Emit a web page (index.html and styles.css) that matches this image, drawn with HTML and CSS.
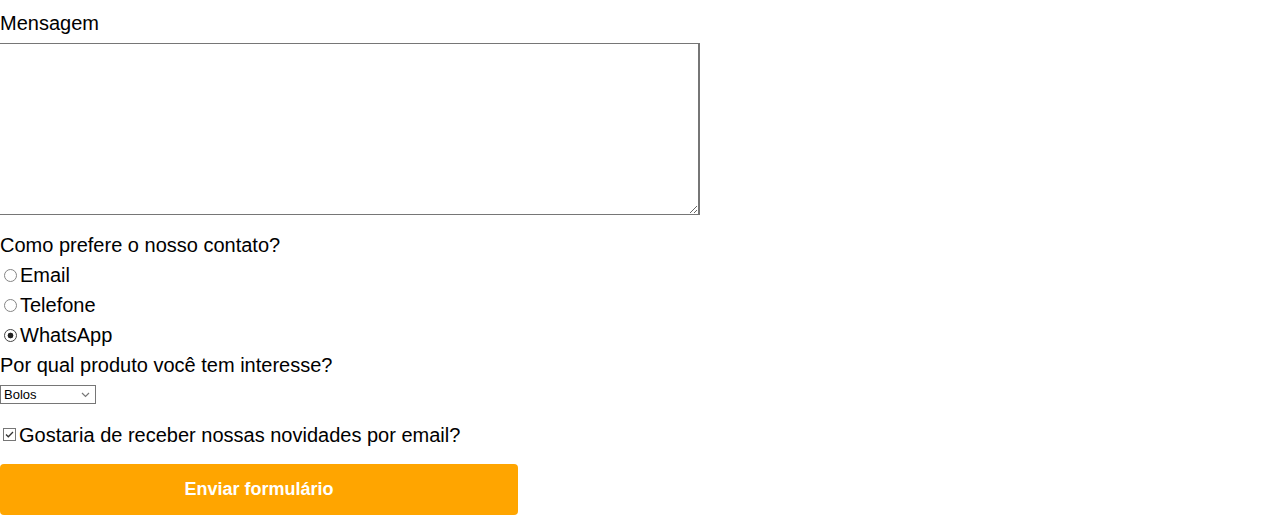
FILE: index.html
```html
<!DOCTYPE html>
<html lang="pt-BR">
<head>
<meta charset="utf-8">
<title>Formulário</title>
<link rel="stylesheet" href="styles.css">
</head>
<body>
<form class="form">
  <label class="field-label" for="mensagem">Mensagem</label>
  <textarea id="mensagem" class="message"></textarea>

  <div class="group">
    <p class="question">Como prefere o nosso contato?</p>
    <label class="option"><input class="radio" type="radio" name="contato" value="email">Email</label>
    <label class="option"><input class="radio" type="radio" name="contato" value="telefone">Telefone</label>
    <label class="option"><input class="radio" type="radio" name="contato" value="whatsapp" checked>WhatsApp</label>
  </div>

  <label class="question" for="produto">Por qual produto você tem interesse?</label>
  <select id="produto" class="product">
    <option>Bolos</option>
    <option>Tortas</option>
    <option>Doces</option>
  </select>

  <label class="option check"><input class="checkbox" type="checkbox" checked>Gostaria de receber nossas novidades por email?</label>

  <button type="submit" class="submit">Enviar formulário</button>
</form>
</body>
</html>
```

FILE: styles.css
```css
body {
  margin: 0;
  font-family: "Liberation Sans", Arial, sans-serif;
  font-size: 20px;
  color: #000;
  background: #fff;
  overflow-x: hidden;
}

.form {
  padding-top: 8px;
  display: flex;
  flex-direction: column;
  align-items: flex-start;
}

.field-label,
.question,
.option {
  display: block;
  line-height: 30px;
  margin: 0;
}

.message {
  display: block;
  box-sizing: border-box;
  width: 701px;
  height: 172px;
  margin: 5px 0 15px -1px;
  border: 1px solid #767676;
  border-right-width: 2px;
}

.radio {
  appearance: none;
  -webkit-appearance: none;
  box-sizing: border-box;
  width: 13px;
  height: 13px;
  margin: 3px 3px 0 4px;
  border: 1px solid #858585;
  border-radius: 50%;
  background: #fff;
}

.radio:checked {
  border-color: #444;
  background: radial-gradient(circle, #222 0 2.6px, #fff 3.2px);
}

.checkbox {
  appearance: none;
  -webkit-appearance: none;
  box-sizing: border-box;
  width: 13px;
  height: 13px;
  margin: 3px 3px 1px 3px;
  border: 1px solid #767676;
  border-radius: 0;
  background: #fff;
}

.checkbox:checked {
  background: #fff url("data:image/svg+xml,%3Csvg xmlns='http://www.w3.org/2000/svg' width='11' height='11' viewBox='0 0 11 11'%3E%3Cpath d='M2 5.5 L4.3 7.8 L9 3' fill='none' stroke='%23333' stroke-width='1.3'/%3E%3C/svg%3E") center / 11px 11px no-repeat;
}

.product {
  appearance: none;
  -webkit-appearance: none;
  display: block;
  box-sizing: border-box;
  width: 96px;
  height: 19px;
  margin: 5px 0 16px;
  padding: 0 0 0 3px;
  border: 1px solid #767676;
  border-radius: 0;
  font-family: "Liberation Sans", Arial, sans-serif;
  font-size: 13px;
  color: #000;
  background: #fff url("data:image/svg+xml,%3Csvg xmlns='http://www.w3.org/2000/svg' width='9' height='6' viewBox='0 0 9 6'%3E%3Cpath d='M1 1 L4.5 4.5 L8 1' fill='none' stroke='%23777' stroke-width='1.2'/%3E%3C/svg%3E") right 5px center / 9px 6px no-repeat;
}

.check {
  margin-bottom: 14px;
}

.submit {
  display: block;
  width: 518px;
  height: 51px;
  border: none;
  border-radius: 4px;
  background: #ffa500;
  color: #fff;
  font-family: "Liberation Sans", Arial, sans-serif;
  font-size: 18px;
  font-weight: bold;
  cursor: pointer;
}
```
